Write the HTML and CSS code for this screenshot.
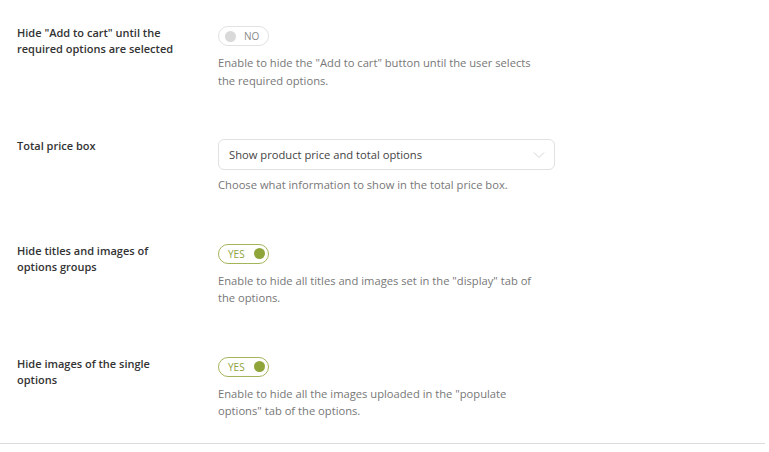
FILE: index.html
```html
<!DOCTYPE html>
<html lang="en">
<head>
<meta charset="utf-8">
<title>Options settings</title>
<link rel="stylesheet" href="styles.css">
</head>
<body>
<div class="panel">
  <div class="row">
    <div class="label">Hide "Add to cart" until the required options are selected</div>
    <div class="field">
      <span class="toggle off"><span class="dot"></span><span class="ttext">NO</span></span>
      <p class="desc">Enable to hide the "Add to cart" button until the user selects the required options.</p>
    </div>
  </div>
  <div class="row">
    <div class="label">Total price box</div>
    <div class="field">
      <div class="select">
        <span>Show product price and total options</span>
        <svg class="chev" width="12" height="8" viewBox="0 0 12 8"><path d="M1 1.5 L6 6.5 L11 1.5" fill="none" stroke="#d4d4d4" stroke-width="1"/></svg>
      </div>
      <p class="desc">Choose what information to show in the total price box.</p>
    </div>
  </div>
  <div class="row">
    <div class="label">Hide titles and images of options groups</div>
    <div class="field">
      <span class="toggle on"><span class="ttext">YES</span><span class="dot"></span></span>
      <p class="desc">Enable to hide all titles and images set in the "display" tab of the options.</p>
    </div>
  </div>
  <div class="row last">
    <div class="label">Hide images of the single options</div>
    <div class="field">
      <span class="toggle on"><span class="ttext">YES</span><span class="dot"></span></span>
      <p class="desc narrow">Enable to hide all the images uploaded in the "populate options" tab of the options.</p>
    </div>
  </div>
</div>
</body>
</html>
```

FILE: styles.css
```css
html, body {
  margin: 0;
  padding: 0;
  background: #ffffff;
}
body {
  font-family: "Open Sans", "Noto Sans", sans-serif;
  color: #333;
}
.panel {
  width: 765px;
  border-bottom: 1px solid #dcdcdc;
}
.row {
  display: flex;
  padding: 25px 0;
}
.row:first-child {
  padding-top: 26px;
}
.row.last {
  padding-bottom: 23px;
}
.label {
  width: 160px;
  margin-left: 17px;
  margin-right: 41px;
  margin-top: -1px;
  font-size: 11px;
  font-weight: 600;
  line-height: 16px;
  color: #333;
}
.field {
  display: flex;
  flex-direction: column;
  align-items: flex-start;
}
.toggle {
  box-sizing: border-box;
  width: 51px;
  height: 20px;
  border-radius: 10px;
  display: flex;
  align-items: center;
  font-size: 10px;
  font-weight: 500;
}
.toggle.off {
  border: 1px solid #e2e2e2;
  color: #8a8a8a;
  padding-left: 6px;
  gap: 8px;
}
.toggle.off .dot {
  width: 11px;
  height: 11px;
  border-radius: 50%;
  background: #d9d9d9;
}
.toggle.on {
  border: 1px solid #a3b55a;
  color: #8fa33b;
  padding-left: 9px;
  gap: 9px;
}
.toggle.on .dot {
  width: 11px;
  height: 11px;
  border-radius: 50%;
  background: #8fa53a;
}
.desc {
  margin: 8px 0 0;
  width: 318px;
  font-size: 11.2px;
  line-height: 17.5px;
  color: #777;
}
.desc.narrow {
  width: 300px;
}
.select {
  box-sizing: border-box;
  width: 337px;
  height: 31px;
  border: 1px solid #e1e1e1;
  border-radius: 6px;
  display: flex;
  align-items: center;
  justify-content: space-between;
  padding: 0 9px 0 10px;
  font-size: 11.2px;
  color: #444;
}
.chev {
  display: block;
}
.row:nth-child(2) .desc {
  margin-top: 6px;
  width: 340px;
}
```
